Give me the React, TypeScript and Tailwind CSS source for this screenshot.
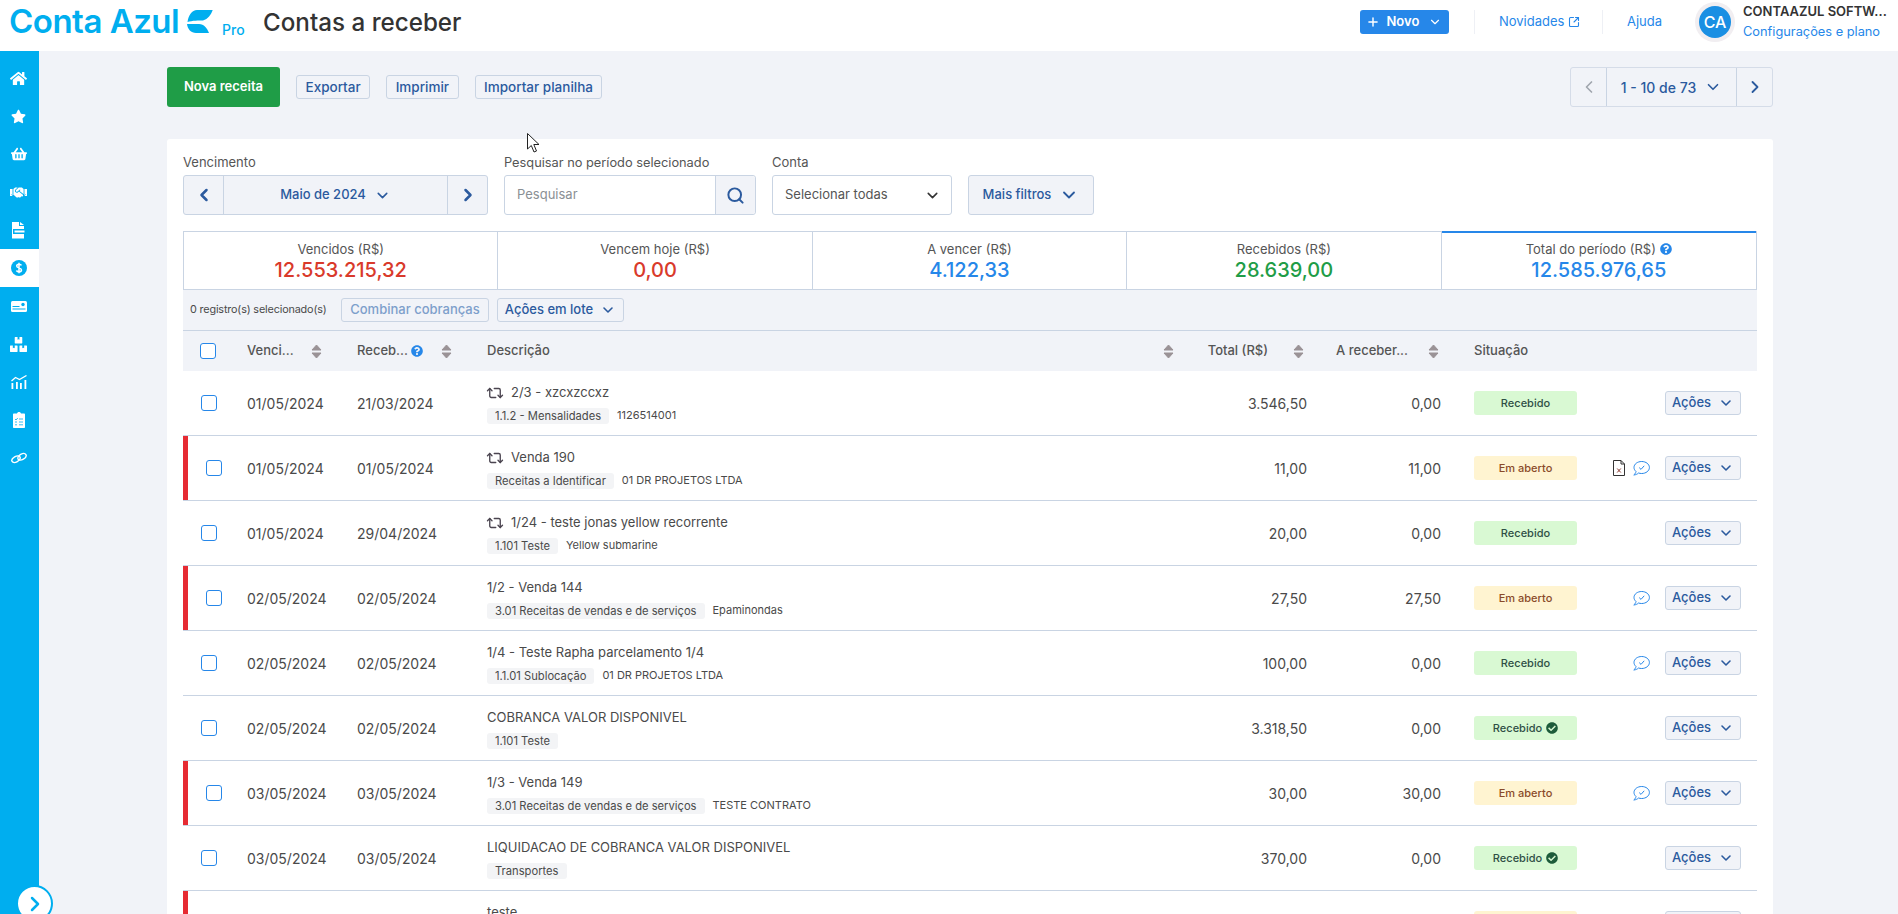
import { ChevronDown, ChevronLeft, ChevronRight, Plus, Repeat2, Search, SquareArrowOutUpRight } from "lucide-react";
import { FaBoxes, FaCheckCircle, FaHandshake, FaHome, FaQuestionCircle, FaShoppingBasket, FaStar } from "react-icons/fa";

type Row = {
  venc: string;
  receb: string;
  repeat?: boolean;
  title: string;
  tag: string;
  who?: string;
  total: string;
  rest: string;
  open?: boolean;
  checked?: boolean;
  xls?: boolean;
  chat?: boolean;
};

const rows: Row[] = [
  { venc: "01/05/2024", receb: "21/03/2024", repeat: true, title: "2/3 - xzcxzccxz", tag: "1.1.2 - Mensalidades", who: "1126514001", total: "3.546,50", rest: "0,00" },
  { venc: "01/05/2024", receb: "01/05/2024", repeat: true, title: "Venda 190", tag: "Receitas a Identificar", who: "01 DR PROJETOS LTDA", total: "11,00", rest: "11,00", open: true, xls: true, chat: true },
  { venc: "01/05/2024", receb: "29/04/2024", repeat: true, title: "1/24 - teste jonas yellow recorrente", tag: "1.101 Teste", who: "Yellow submarine", total: "20,00", rest: "0,00" },
  { venc: "02/05/2024", receb: "02/05/2024", title: "1/2 - Venda 144", tag: "3.01 Receitas de vendas e de serviços", who: "Epaminondas", total: "27,50", rest: "27,50", open: true, chat: true },
  { venc: "02/05/2024", receb: "02/05/2024", title: "1/4 - Teste Rapha parcelamento 1/4", tag: "1.1.01 Sublocação", who: "01 DR PROJETOS LTDA", total: "100,00", rest: "0,00", chat: true },
  { venc: "02/05/2024", receb: "02/05/2024", title: "COBRANCA VALOR DISPONIVEL", tag: "1.101 Teste", total: "3.318,50", rest: "0,00", checked: true },
  { venc: "03/05/2024", receb: "03/05/2024", title: "1/3 - Venda 149", tag: "3.01 Receitas de vendas e de serviços", who: "TESTE CONTRATO", total: "30,00", rest: "30,00", open: true, chat: true },
  { venc: "03/05/2024", receb: "03/05/2024", title: "LIQUIDACAO DE COBRANCA VALOR DISPONIVEL", tag: "Transportes", total: "370,00", rest: "0,00", checked: true },
  { venc: "03/05/2024", receb: "03/05/2024", title: "teste", tag: "Transportes", total: "50,00", rest: "50,00", open: true },
];

const stats = [
  { label: "Vencidos (R$)", value: "12.553.215,32", color: "text-[#d93a2b]" },
  { label: "Vencem hoje (R$)", value: "0,00", color: "text-[#d93a2b]" },
  { label: "A vencer (R$)", value: "4.122,33", color: "text-[#2687e9]" },
  { label: "Recebidos (R$)", value: "28.639,00", color: "text-[#1f9d47]" },
];

const gridCols = "grid grid-cols-[64px_110px_130px_703px_117px_134px_136px_180px]";

function LogoMark() {
  return (
    <svg width="26" height="23" viewBox="0 0 26 23" fill="#00aeef">
      <path d="M25.700 0H10C5 0 1.500 5 .5 12C5 10.500 12 10.500 16 10.500C21 9 24 5 25.700 0Z" />
      <path d="M0 14H12C17 14 20 18 22 23H9C4 23 .5 19 0 14Z" />
    </svg>
  );
}

function SortIcon() {
  return (
    <svg width="11" height="15" viewBox="0 0 11 15" fill="#9a9296" stroke="#9a9296" strokeWidth="1" strokeLinejoin="round" className="shrink-0">
      <path d="M5.500 1L10 6H1Z" />
      <path d="M5.500 14L10 9H1Z" />
    </svg>
  );
}

function Checkbox() {
  return <span className="block size-4 shrink-0 rounded-[3px] border border-[#2687e9] bg-white" />;
}

function HelpIcon() {
  return <FaQuestionCircle size={12} className="shrink-0 text-[#2687e9]" />;
}

function ChatIcon() {
  return (
    <svg width="17" height="16" viewBox="0 0 17 16" fill="none" stroke="#2687e9" strokeWidth="1">
      <path d="M3 11.500C1.800 10.400 1 9.100 1 7.500C1 4.200 4.300 1.500 8.700 1.500C13 1.500 16.400 4.200 16.400 7.500C16.400 10.800 13 13.500 8.700 13.500C7.500 13.500 6.500 13.300 5.500 13C4.500 14 3 14.800 .8 15C2 14 2.800 12.800 3 11.500Z" />
      <path d="M6.200 7.600L8 9.400L11.200 5.800" />
    </svg>
  );
}

function XlsIcon() {
  return (
    <svg width="12" height="16" viewBox="0 0 12 16" fill="none" stroke="#333" strokeWidth="1">
      <path d="M1 .5H8L11.500 4V15.500H.5V.5Z" />
      <path d="M8 .5V4H11.500" />
      <path d="M4.200 8.500L7.800 12.500M7.800 8.500L4.200 12.500" stroke="#8a3a30" />
    </svg>
  );
}

function SideDoc() {
  return (
    <svg width="13" height="17" viewBox="0 0 13 17" fill="#fff">
      <path d="M0 0H7V4H12V7H1V12H12V16.500H0Z" />
      <path d="M8 0L12 3H8Z" />
      <rect x="2.500" y="8.500" width="10" height="2" />
    </svg>
  );
}

function SideDollar() {
  return (
    <svg width="16" height="16" viewBox="0 0 16 16">
      <circle cx="8" cy="8" r="8" fill="#00aeef" />
      <path d="M10.500 5.400C10 4.600 9 4.200 8 4.200C6.600 4.200 5.700 4.900 5.700 6C5.700 8.500 10.500 7.300 10.500 10C10.500 11.100 9.500 11.800 8 11.800C6.900 11.800 6 11.400 5.400 10.500M8 2.800V13.200" fill="none" stroke="#fff" strokeWidth="1.500" />
    </svg>
  );
}

function SideCard() {
  return (
    <svg width="16" height="11" viewBox="0 0 16 11">
      <rect width="16" height="11" rx="1.500" fill="#fff" />
      <rect x="1.500" y="5" width="7" height="1" fill="#00aeef" />
      <rect x="1.500" y="7.500" width="13" height="1" fill="#00aeef" />
      <circle cx="12" cy="3.500" r="1.700" fill="#00aeef" />
    </svg>
  );
}

function SideChart() {
  return (
    <svg width="16" height="14" viewBox="0 0 16 14" fill="#fff">
      <path d="M.5 6L4.500 2.500L8.500 4.500L15.500 .5" fill="none" stroke="#fff" strokeWidth="1.300" />
      <rect x=".5" y="8" width="1.800" height="6" />
      <rect x="5" y="7" width="1.800" height="7" />
      <rect x="9" y="8" width="1.800" height="6" />
      <rect x="13.500" y="5" width="1.800" height="9" />
    </svg>
  );
}

function SideClipboard() {
  return (
    <svg width="12" height="16" viewBox="0 0 12 16" fill="#fff">
      <path d="M1 1.500H4C4.300 .5 5 0 6 0C7 0 7.700 .5 8 1.500H11C11.600 1.500 12 1.900 12 2.500V15C12 15.600 11.600 16 11 16H1C.4 16 0 15.600 0 15V2.500C0 1.900 .4 1.500 1 1.500Z" />
      <path d="M2 7L3 8L4.800 6M6 7H10M2 10H4M6 10H10M2 12.800H4M6 12.800H10" fill="none" stroke="#00aeef" strokeWidth=".8" />
    </svg>
  );
}

function SideLink() {
  return (
    <svg width="16" height="12" viewBox="0 0 16 12" fill="none" stroke="#fff" strokeWidth="1.400">
      <ellipse cx="5" cy="7.200" rx="4.500" ry="2.700" transform="rotate(-30 5 7.200)" />
      <ellipse cx="11" cy="4.800" rx="4.500" ry="2.700" transform="rotate(-30 11 4.800)" />
    </svg>
  );
}

function OutlineButton({ label }: { label: string }) {
  return (
    <button className="h-6 rounded-[3px] border border-[#c9d4e3] bg-[#f1f3f8] px-[8.500px] text-[13.500px] font-medium whitespace-nowrap text-[#2b5a9e]">
      {label}
    </button>
  );
}

function Header() {
  return (
    <header className="flex h-[51px] shrink-0 items-center bg-white pb-2">
      <div className="flex w-[263px] shrink-0 items-center pl-[9px]">
        <span className="w-[168px] text-[33px] leading-none font-semibold tracking-[-0.5px] whitespace-nowrap text-[#00aeef]">Conta Azul</span>
        <span className="ml-[10px]"><LogoMark /></span>
        <span className="mt-[17px] ml-[9px] text-[14px] leading-none font-medium text-[#00aeef]">Pro</span>
      </div>
      <h1 className="mt-[3px] text-[24.200px] leading-none font-medium text-[#333333]">Contas a receber</h1>
      <div className="ml-auto flex items-center">
        <button className="flex h-6 w-[89px] items-center justify-center gap-[6px] rounded-[3px] bg-[#2687e9] text-[13px] font-semibold text-white">
          <Plus size={14} strokeWidth={2.500} />
          Novo
          <ChevronDown size={14} strokeWidth={2} className="ml-[3px]" />
        </button>
        <span className="ml-[25px] h-6 w-px bg-[#eef0f5]" />
        <span className="ml-[24px] flex w-[103px] items-center gap-1 text-[13px] text-[#2687e9]">
          Novidades
          <SquareArrowOutUpRight size={12} strokeWidth={2.200} />
        </span>
        <span className="h-6 w-px bg-[#eef0f5]" />
        <span className="ml-[24px] text-[13px] text-[#2687e9]">Ajuda</span>
        <span className="ml-[33px] flex size-10 items-center justify-center rounded-full bg-[#f1eef1]">
          <span className="flex size-8 items-center justify-center rounded-full bg-[#1a8fe3] text-[16px] font-medium text-white">CA</span>
        </span>
        <div className="ml-2 flex w-[155px] flex-col gap-[5px]">
          <span className="text-[13px] leading-[15px] font-semibold text-[#333333]">CONTAAZUL SOFTW...</span>
          <span className="text-[12.800px] leading-[15px] text-[#2687e9]">Configurações e plano</span>
        </div>
      </div>
    </header>
  );
}

function Sidebar() {
  const icons = [
    <FaHome size={17} color="#fff" />,
    <FaStar size={15} color="#fff" />,
    <FaShoppingBasket size={16} color="#fff" />,
    <FaHandshake size={17} color="#fff" />,
    <SideDoc />,
    <SideDollar />,
    <SideCard />,
    <FaBoxes size={17} color="#fff" />,
    <SideChart />,
    <SideClipboard />,
    <SideLink />,
  ];
  return (
    <aside className="relative flex w-[39px] shrink-0 flex-col bg-[#00aeef] pt-2">
      {icons.map((icon, i) => (
        <div key={i} className={`flex h-[38px] items-center justify-center pr-[9px] pl-[7px] ${i === 5 ? "bg-white" : ""}`}>
          {icon}
        </div>
      ))}
      <div className="mt-auto h-[31px] border-t border-[#4cc6f4]" />
      <div className="absolute top-[834px] left-4 flex size-[37px] items-center justify-center rounded-full border-2 border-[#00aeef] bg-white">
        <ChevronRight size={24} strokeWidth={2.500} className="text-[#00aeef]" />
      </div>
    </aside>
  );
}

function Toolbar() {
  return (
    <div className="flex h-10 items-center">
      <button className="h-10 w-[113px] rounded-[3px] bg-[#1f9d47] text-[13px] font-semibold text-white">Nova receita</button>
      <div className="ml-4 flex gap-4">
        <OutlineButton label="Exportar" />
        <OutlineButton label="Imprimir" />
        <OutlineButton label="Importar planilha" />
      </div>
      <div className="ml-auto flex h-10 w-[203px] rounded-[3px] border border-[#d5dce8]">
        <span className="flex w-[36px] items-center justify-center border-r border-[#c9d4e3]">
          <ChevronLeft size={20} className="text-[#a0a6ad]" />
        </span>
        <span className="flex flex-1 items-center justify-center gap-2 text-[14px] font-medium text-[#2b5a9e]">
          1 - 10 de 73
          <ChevronDown size={18} strokeWidth={2.200} />
        </span>
        <span className="flex w-[36px] items-center justify-center border-l border-[#c9d4e3]">
          <ChevronRight size={20} strokeWidth={2.200} className="text-[#2b5a9e]" />
        </span>
      </div>
    </div>
  );
}

function Filters() {
  return (
    <div className="flex gap-4">
      <div className="w-[305px]">
        <div className="mb-[3px] text-[13px] leading-[19px] text-[#555555]">Vencimento</div>
        <div className="flex h-10 rounded-[3px] border border-[#c9d4e3] bg-[#f1f3f8] text-[#2b5a9e]">
          <span className="flex w-10 items-center justify-center border-r border-[#c9d4e3]">
            <ChevronLeft size={20} strokeWidth={3} />
          </span>
          <span className="flex flex-1 items-center justify-center gap-2 text-[13px] font-medium">
            Maio de 2024
            <ChevronDown size={17} strokeWidth={2.200} />
          </span>
          <span className="flex w-10 items-center justify-center border-l border-[#c9d4e3]">
            <ChevronRight size={20} strokeWidth={3} />
          </span>
        </div>
      </div>
      <div className="w-[252px]">
        <div className="mb-[3px] text-[12.800px] leading-[19px] whitespace-nowrap text-[#555555]">Pesquisar no período selecionado</div>
        <div className="flex h-10 rounded-[3px] border border-[#c9d4e3]">
          <span className="flex flex-1 items-center pl-3 text-[13px] text-[#8a8f94]">Pesquisar</span>
          <span className="flex w-10 items-center justify-center rounded-r-[3px] border-l border-[#c9d4e3] bg-[#f1f3f8]">
            <Search size={19} strokeWidth={2.500} className="text-[#2b5a9e]" />
          </span>
        </div>
      </div>
      <div className="w-[180px]">
        <div className="mb-[3px] text-[13px] leading-[19px] text-[#555555]">Conta</div>
        <div className="flex h-10 items-center justify-between rounded-[3px] border border-[#c9d4e3] pr-[10px] pl-3 text-[13px] text-[#555555]">
          Selecionar todas
          <ChevronDown size={17} strokeWidth={2.200} className="text-[#333333]" />
        </div>
      </div>
      <div className="flex w-[126px] flex-col justify-end">
        <div className="flex h-10 items-center justify-center gap-2 rounded-[3px] border border-[#c9d4e3] bg-[#f1f3f8] text-[13px] font-medium text-[#2b5a9e]">
          Mais filtros
          <ChevronDown size={20} strokeWidth={2.200} />
        </div>
      </div>
    </div>
  );
}

function Stats() {
  return (
    <div className="mt-4 grid h-[59px] grid-cols-5 border border-[#c9d4e3]">
      {stats.map((s) => (
        <div key={s.label} className="flex flex-col items-center justify-center border-r border-[#c9d4e3] pt-px">
          <span className="text-[13px] leading-[18px] text-[#555555]">{s.label}</span>
          <span className={`text-[20px] leading-[24px] font-medium ${s.color}`}>{s.value}</span>
        </div>
      ))}
      <div className="-mt-px flex flex-col items-center justify-center border-t-2 border-[#2687e9]">
        <span className="flex items-center gap-1 text-[13px] leading-[18px] text-[#555555]">
          Total do período (R$)
          <HelpIcon />
        </span>
        <span className="text-[20px] leading-[24px] font-medium text-[#2687e9]">12.585.976,65</span>
      </div>
    </div>
  );
}

function TableRow({ row }: { row: Row }) {
  return (
    <div className={`${gridCols} h-[65px] border-b border-[#c9d4e3] bg-white text-[14px] text-[#4a4a4a]`}>
      <div className="flex items-stretch">
        {row.open && <span className="w-[5px] bg-[#e62b33]" />}
        <div className="flex items-center pl-[18px]">
          <Checkbox />
        </div>
      </div>
      <div className="flex items-center">{row.venc}</div>
      <div className="flex items-center">{row.receb}</div>
      <div className="flex flex-col justify-center gap-[6px] pt-px">
        <div className="flex h-[18px] items-center gap-[7px] text-[13px] text-[#4a4a4a]">
          {row.repeat && <Repeat2 size={18} strokeWidth={1.800} className="-ml-px text-[#4b4550]" />}
          {row.title}
        </div>
        <div className="flex h-4 items-center gap-2 text-[11px] text-[#4a4a4a]">
          <span className="rounded-[3px] bg-[#f3f4f6] px-2 text-[11.200px] leading-4">{row.tag}</span>
          {row.who && <span>{row.who}</span>}
        </div>
      </div>
      <div className="flex items-center justify-end">{row.total}</div>
      <div className="flex items-center justify-end">{row.rest}</div>
      <div className="flex items-center pl-[33px]">
        <span
          className={`flex h-6 w-[103px] items-center justify-center gap-1 rounded-[3px] text-[11px] font-medium ${
            row.open ? "bg-[#fff4d1] text-[#8a4b2a]" : "bg-[#d9f9d3] text-[#2f4f45]"
          }`}
        >
          {row.open ? "Em aberto" : "Recebido"}
          {row.checked && <FaCheckCircle size={12} className="text-[#1d5c3a]" />}
        </span>
      </div>
      <div className="flex items-center justify-end gap-[8px] pr-4">
        {row.xls && <XlsIcon />}
        {row.chat && <span className="mr-[7px]"><ChatIcon /></span>}
        <button className="flex h-6 w-[76px] items-center justify-center gap-[7px] rounded-[3px] border border-[#c9d4e3] bg-[#f1f3f8] text-[13px] font-medium text-[#2b5a9e]">
          Ações
          <ChevronDown size={16} strokeWidth={2.400} />
        </button>
      </div>
    </div>
  );
}

function Table() {
  return (
    <div>
      <div className="flex h-[41px] items-center gap-[8px] border-b border-[#c9d4e3] bg-[#f1f3f8] pl-[7px] text-[#4a4a4a]">
        <span className="w-[143px] text-[10.800px] tracking-[-0.15px] whitespace-nowrap">0 registro(s) selecionado(s)</span>
        <button className="h-6 w-[148px] rounded-[3px] border border-[#c9d4e3] bg-[#f1f3f8] text-[13px] font-medium whitespace-nowrap text-[#7d9fcb]">
          Combinar cobranças
        </button>
        <button className="flex h-6 w-[127px] items-center justify-center gap-[7px] rounded-[3px] border border-[#c9d4e3] text-[13px] font-medium text-[#2b5a9e]">
          Ações em lote
          <ChevronDown size={16} strokeWidth={2.400} />
        </button>
      </div>
      <div className={`${gridCols} h-10 bg-[#f1f3f8] text-[13px] font-medium text-[#555555]`}>
        <div className="flex items-center pl-[17px]">
          <Checkbox />
        </div>
        <div className="flex w-[75px] items-center justify-between">Venci... <SortIcon /></div>
        <div className="flex w-[95px] items-center">
          Receb...
          <span className="ml-auto"><HelpIcon /></span>
          <span className="ml-[18px]"><SortIcon /></span>
        </div>
        <div className="flex items-center justify-between pr-4">Descrição <SortIcon /></div>
        <div className="flex items-center justify-end gap-[25px] pr-[3px]">Total (R$) <SortIcon /></div>
        <div className="flex items-center justify-end gap-[20px] pr-[2px]">A receber... <SortIcon /></div>
        <div className="flex items-center pl-[33px]">Situação</div>
        <div />
      </div>
      {rows.map((row) => (
        <TableRow key={row.title} row={row} />
      ))}
    </div>
  );
}

export default function App() {
  return (
    <div className="relative flex h-screen w-full flex-col overflow-hidden bg-[#f1f3f8] font-['Inter',sans-serif]">
      <Header />
      <div className="flex flex-1">
        <Sidebar />
        <main className="ml-[128px] w-[1606px] pt-4">
          <Toolbar />
          <section className="mt-8 rounded-t-[3px] bg-white px-4 pt-[14px]">
            <Filters />
            <Stats />
            <Table />
          </section>
        </main>
      </div>
      <svg className="absolute top-[133px] left-[527px]" width="13" height="20" viewBox="0 0 13 20" fill="#fff" stroke="#222" strokeWidth="1">
        <path d="M.5 .5V16L4.300 12.500L7 19L9.500 18L6.800 11.500H12Z" />
      </svg>
    </div>
  );
}
